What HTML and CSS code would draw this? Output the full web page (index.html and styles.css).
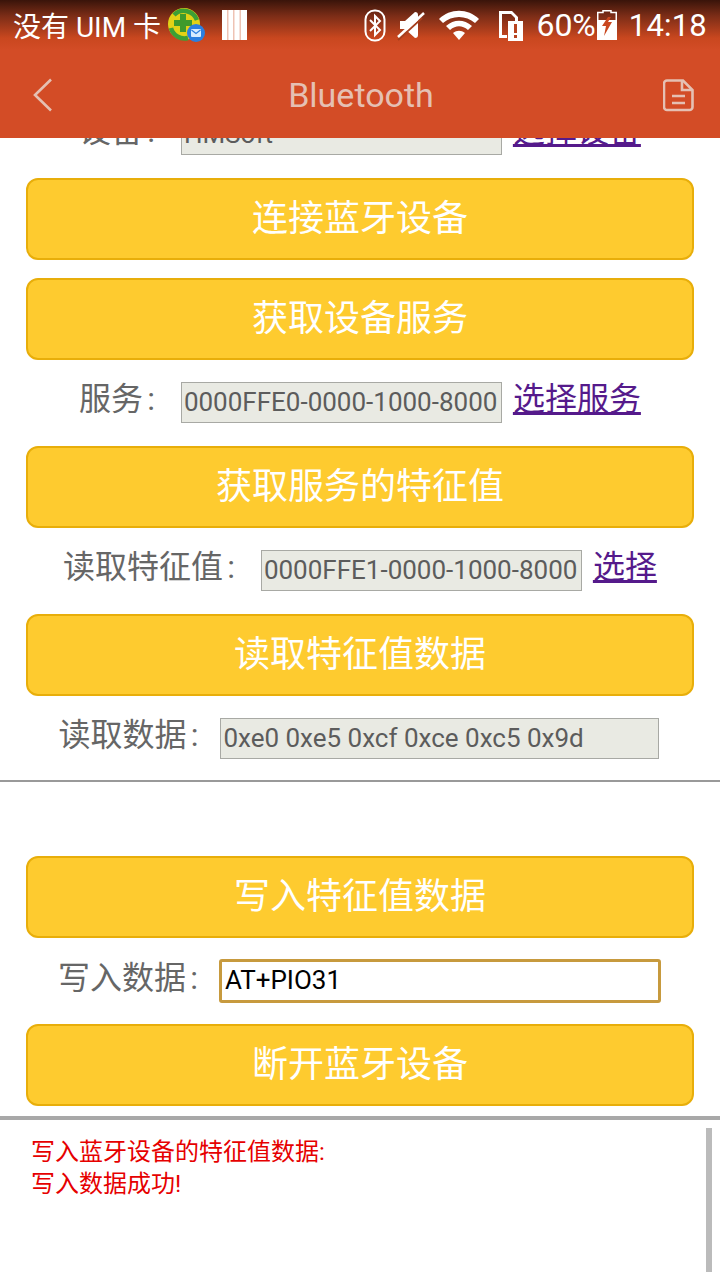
FILE: index.html

```html
<!DOCTYPE html>
<html lang="zh-CN">
<head>
  <meta charset="UTF-8">
  <title>Bluetooth</title>
  <meta name="viewport" content="width=device-width, initial-scale=1.0">
  <link rel="stylesheet" href="styles.css">
</head>
<body>
  <div class="header">
    <div class="status">
      <span class="carrier">没有 UIM 卡</span>
      <svg class="ic-360" width="37" height="36" viewBox="0 0 37 36">
        <circle cx="16" cy="16" r="16" fill="#e2d216"/>
        <path d="M6 7A14 14 0 0 1 29 12" fill="none" stroke="#3d9f35" stroke-width="4.500"/>
        <path d="M3 20A14 14 0 0 0 20 30" fill="none" stroke="#3d9f35" stroke-width="4.500"/>
        <path d="M12 6h6v6h6v6h-6v6h-6v-6H6v-6h6z" fill="#3f9a2c"/>
        <circle cx="28" cy="25" r="9" fill="#2a7fe0"/>
        <rect x="23" y="21" width="10" height="8" rx="1" fill="#d6ecff"/>
        <path d="M23.500 22l4.500 3.500 4.500-3.500" fill="none" stroke="#2a7fe0" stroke-width="1.200"/>
      </svg>
      <svg class="ic-bars" width="25" height="30" viewBox="0 0 25 30">
        <rect width="25" height="30" fill="#eec3b4"/>
        <path d="M0 0h5v30H0zM6.500 0h4.500v30H6.500zM12.500 0h5v30h-5zM19 0h6v30h-6z" fill="#fff"/>
      </svg>
      <span class="spacer"></span>
      <svg class="ic-bt" width="22" height="33" viewBox="0 0 22 33">
        <rect x="1.500" y="1.500" width="19" height="30" rx="9" fill="none" stroke="#fff" stroke-width="2"/>
        <path d="M6 11l10 10-5 5V7l5 5-10 10" fill="none" stroke="#fff" stroke-width="2"/>
      </svg>
      <svg class="ic-mute" width="30" height="32" viewBox="0 0 30 32">
        <path d="M3 12h5L18 3q3 0 3 3v20q0 3-3 3L8 20H3z" fill="#fff"/>
        <path d="M1 31L25 9" stroke="#a63f1e" stroke-width="2"/>
        <path d="M1 28L27 4" stroke="#fff" stroke-width="2.500"/>
      </svg>
      <svg class="ic-wifi" width="40" height="30" viewBox="0 0 40 30">
        <path d="M0 9C11-2 29-2 40 9l-4 4C27 5 13 5 4 13z" fill="#fff"/>
        <path d="M7 16c8-7 18-7 26 0l-4 4c-6-5-12-5-18 0z" fill="#fff"/>
        <path d="M14 23c4-3 8-3 12 0l-6 7z" fill="#fff"/>
      </svg>
      <svg class="ic-sim" width="26" height="32" viewBox="0 0 26 32">
        <path d="M1 2h13l6 6v4h-3V9l-4-4H4v21h5v3H1z" fill="#fff"/>
        <path d="M10 12h15v20H10z" fill="#fff"/>
        <path d="M16 15h3v9h-3zM16 26h3v3h-3z" fill="#b8431f"/>
      </svg>
      <span class="pct">60%</span>
      <svg class="ic-batt" width="20" height="30" viewBox="0 0 20 30">
        <path d="M6 2.500V.75h8v1.750h5.250V11H.75V2.500z" fill="none" stroke="#fff" stroke-width="1.500"/>
        <path d="M0 10h20v20H0z" fill="#fff"/>
        <path d="M11 7L5 16h4L7 26l8-14h-4l3-5z" fill="#c9471f"/>
      </svg>
      <span class="time">14:18</span>
    </div>
    <div class="toolbar">
      <svg class="ic-back" width="20" height="34" viewBox="0 0 20 34">
        <path d="M18 1.500L2 17l16 15.500" fill="none" stroke="#e5c0b3" stroke-width="2.600"/>
      </svg>
      <span class="title">Bluetooth</span>
      <svg class="ic-doc" width="31" height="33" viewBox="0 0 31 33">
        <path d="M4 1.500h16l9.500 9.500V28a3 3 0 0 1-3 3H4a3 3 0 0 1-3-3V4.500a3 3 0 0 1 3-3z" fill="none" stroke="#e5c0b3" stroke-width="2.600"/>
        <path d="M19 2v9h10" fill="none" stroke="#e5c0b3" stroke-width="2.600"/>
        <path d="M9 17h13M9 24h13" stroke="#e5c0b3" stroke-width="2.600"/>
      </svg>
    </div>
  </div>

  <div class="pane">
    <div class="scroll">
      <div class="row">
        <label>设备<span class="colon">:</span></label>
        <input class="box w322" type="text" value="HMSoft" readonly>
        <a class="link" href="#">选择设备</a>
      </div>
      <button class="btn">连接蓝牙设备</button>
      <button class="btn">获取设备服务</button>
      <div class="row">
        <label>服务<span class="colon">:</span></label>
        <input class="box w322" type="text" value="0000FFE0-0000-1000-8000" readonly>
        <a class="link" href="#">选择服务</a>
      </div>
      <button class="btn">获取服务的特征值</button>
      <div class="row">
        <label>读取特征值<span class="colon">:</span></label>
        <input class="box w322" type="text" value="0000FFE1-0000-1000-8000" readonly>
        <a class="link" href="#">选择</a>
      </div>
      <button class="btn">读取特征值数据</button>
      <div class="row row-wide">
        <label>读取数据<span class="colon">:</span></label>
        <input class="box w440" type="text" value="0xe0 0xe5 0xcf 0xce 0xc5 0x9d" readonly>
      </div>
      <div class="rule"></div>
      <button class="btn">写入特征值数据</button>
      <div class="row row-wide row-write">
        <label>写入数据<span class="colon">:</span></label>
        <input class="box box-on" type="text" value="AT+PIO31">
      </div>
      <button class="btn">断开蓝牙设备</button>
    </div>
    <div class="log">
      <p>写入蓝牙设备的特征值数据:<br>写入数据成功!</p>
      <div class="scrollbar"></div>
    </div>
  </div>
</body>
</html>
```

FILE: styles.css

```css
html, body { margin: 0; padding: 0; }
body {
  width: 720px;
  height: 1280px;
  overflow: hidden;
  display: flex;
  flex-direction: column;
  background: #fff;
  font-family: Roboto, "Noto Sans CJK SC", sans-serif;
  color: #666;
}

.header {
  height: 138px;
  flex: none;
  background: linear-gradient(#39140a 0, #7c2d17 16px, #c9471f 38px, #d34c26 50px);
}
.status {
  height: 50px;
  display: flex;
  align-items: center;
  color: #fff;
  padding: 0 13px;
}
.carrier { font-size: 28px; width: 155px; white-space: nowrap; }
.ic-360 { margin-top: 2px; }
.ic-bars { margin-left: 17px; }
.spacer { flex: 1; }
.ic-mute { margin-left: 11px; }
.ic-wifi { margin-left: 12px; }
.ic-sim { margin-left: 19px; }
.pct { font-size: 32px; margin-left: 12px; }
.ic-batt { margin-left: 1px; }
.time { font-size: 31px; margin-left: 12px; letter-spacing: .2px; }

.toolbar {
  height: 88px;
  display: flex;
  align-items: center;
  justify-content: space-between;
  padding: 2px 26px 0 33px;
  box-sizing: border-box;
}
.title { font-size: 34px; color: #e5c0b3; margin-left: 6px; }

.pane { flex: 1; display: flex; flex-direction: column; min-height: 0; }
.scroll {
  height: 978px;
  flex: none;
  overflow: hidden;
  display: flex;
  flex-direction: column;
  padding: 0 26px;
  box-sizing: border-box;
}
.scroll > .row:first-child { margin-top: -24px; }

.btn {
  flex: none;
  height: 82px;
  padding: 0 0 8px;
  background: #fecb2f;
  border: 2px solid #e8ae0a;
  border-radius: 12px;
  color: #fff;
  font-family: inherit;
  font-size: 36px;
}
.btn + .btn { margin-top: 18px; }

.row {
  flex: none;
  height: 41px;
  margin: 22px 0 23px;
  display: flex;
  align-items: center;
  justify-content: center;
  font-size: 32px;
}
.row-wide { padding-right: 2px; }
.row-write { height: 42px; margin: 22px 0; }
.row label { padding-bottom: 13px; white-space: nowrap; }
.colon { margin: 0 26px 0 4px; }
.row-wide .colon { margin-right: 22px; }

.box {
  height: 100%;
  box-sizing: border-box;
  padding: 0 3px 2px 2px;
  margin: 0;
  background: #e9eae3;
  border: 1px solid #a8a9a4;
  border-radius: 0;
  color: #5c5c5c;
  font-family: inherit;
  font-size: 26px;
  outline: none;
}
.box-on {
  flex: none;
  width: 442px;
  height: 44px;
  margin: 0 -1px;
  padding-left: 3px;
  background: #fff;
  border: 3px solid #c79a3e;
  border-radius: 3px;
  color: #000;
}
.w322 { width: 321px; }
.w440 { width: 439px; }
.row .link { margin-left: 11px; padding-bottom: 13px; color: #551a8b; }

.rule {
  flex: none;
  height: 2px;
  margin: -2px -26px 74px;
  background: #999;
}

.log {
  flex: 1;
  position: relative;
  border-top: 4px solid #a8a8a8;
  color: #e60000;
  font-size: 24px;
  line-height: 32px;
}
.log p { margin: 16px 0 0 31px; }
.scrollbar {
  position: absolute;
  right: 8px;
  top: 8px;
  width: 6px;
  height: 144px;
  background: #bbb;
}
```
